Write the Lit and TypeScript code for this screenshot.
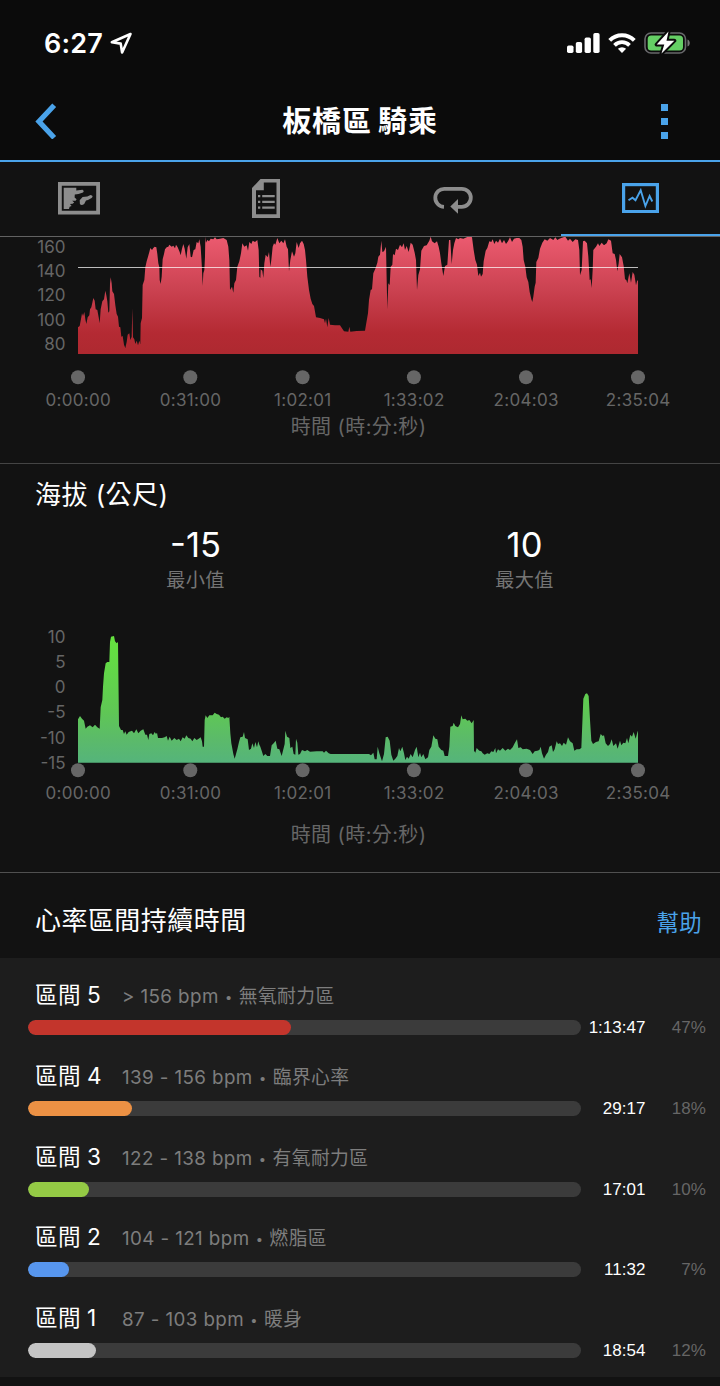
import { LitElement, html, css, svg } from "lit";
import { customElement, property } from "lit/decorators.js";

const TIMES = ["0:00:00", "0:31:00", "1:02:01", "1:33:02", "2:04:03", "2:35:04"];
const TICK_X = [78, 190.3, 302.6, 413.9, 526, 638];

interface Trace {
  shift: number;
  points: string;
}

// Samples in thirds of a pixel; each run is shifted along the time axis.
const HEART: Trace[] = [
  { shift: 60, points: "174,372 174,292 179,288 184,262 186,250 189,258 193,246 196,268 199,282 203,262 208,256 210,238 214,232 217,218 220,204 224,212 227,238 232,240 236,262 239,280 242,238 247,214 252,208 256,182 259,196 262,214 265,248 268,244 270,162 272,142 275,160 277,184 282,192 286,226 290,252 294,260 297,290 301,292 304,320 308,318 312,344 316,354 320,336 323,314 328,310 331,330 335,320 337,235 339,322 343,328 346,342 350,332 354,346 358,332 361,342 362,280 366,264 368,165 373,150 376,112 380,94 384,80 388,66 391,54 396,60 400,54 404,50 409,52 412,72 415,100 418,112 419,150 422,162 425,140 428,88 432,72 435,58 440,52 445,50 448,44 455,50 460,47 465,55 468,44 473,52 479,66 482,76 486,56 490,42 494,56 499,86 503,52 508,42 512,80 516,82 521,60 526,58 530,36 535,40 538,28 542,50 545,100 548,168 550,130 553,120 555,80 556,20 558,38 562,30 567,34 572,26 580,28 585,22 590,28 600,26 610,24 620,30 625,50 628,90 630,180 636,170 640,188 643,160 648,150 652,110 658,94 663,70 667,40 673,50 680,46 684,62 688,36 694,42 698,32 705,36 712,30 716,60 718,140" },
  { shift: 660, points: "121,144 122,118 127,122 130,144 133,100 137,74 143,82 147,66 151,110 154,90 158,50 162,40 166,44 172,24 178,40 184,32 190,40 195,28 200,50 204,58 207,124 211,90 216,64 222,80 226,70 230,36 236,54 240,40 246,32 251,42 255,60 258,90 262,140 267,180 272,206 277,222 282,228 288,262 300,264 312,268 315,280 318,266 322,292 326,264 330,284 345,286 360,286 372,304 385,305 388,290 391,305 410,303 435,302 438,284 444,250 447,210 452,180 456,178 460,130 466,116 472,98 475,80 480,74 484,32 487,66 492,64 498,50 500,150 502,238 505,160 509,165 512,110 517,104 519,72 524,76 528,56 534,60 540,44 546,52 551,40 555,60 560,48 566,66 572,38 578,44 584,68 588,90 591,180 595,135 600,118 604,62 612,48 620,46 628,32 632,20 636,34 644,40 651,34 656,50 660,70 664,100 670,138 675,108 682,104 687,30 691,30 695,102 699,60 703,40 708,24 715,28" },
  { shift: 1290, points: "90,24 100,26 110,22 118,18 126,22 131,60 136,90 141,104 145,138 150,128 153,140 158,132 161,94 167,62 172,54 178,34 184,36 188,28 193,42 198,32 204,38 210,26 216,40 222,30 228,42 234,34 240,22 246,36 252,26 260,24 268,24 274,30 278,50 281,90 286,110 290,142 295,156 299,186 304,208 307,216 310,200 314,170 317,158 319,96 325,84 330,56 337,38 344,28 352,32 360,24 370,30 376,22 382,30 388,26 400,22 406,20 414,32 420,26 428,36 436,28 444,30 448,60 450,136 455,120 459,34 464,32 471,40 475,80 479,150 482,148 485,174 488,120 490,60 498,50 504,40 508,48 515,38 522,46 530,40 535,28 543,32 548,70 554,72 558,90 562,124 566,100 569,72 576,82 581,108 585,148 589,150 592,160 598,130 603,158 608,126 613,134 618,166 621,154 624,150 624,372" },
];

const ALTITUDE: Trace[] = [
  { shift: 60, points: "174,428 174,298 180,288 186,296 192,302 197,326 202,320 210,316 218,322 225,314 232,322 239,326 242,262 247,240 249,200 252,160 257,130 262,126 268,126 270,66 273,50 282,48 285,64 290,70 294,66 297,318 303,330 308,330 312,342 316,334 320,344 326,336 336,332 342,340 349,328 355,340 362,332 370,328 376,344 381,344 385,360 388,342 394,340 399,346 404,336 408,342 411,338 414,354 426,354 434,352 440,348 444,362 449,350 455,362 463,354 470,360 477,356 482,364 488,352 494,356 499,346 505,354 512,356 517,364 523,354 530,360 536,356 542,352 546,364 548,380 552,380 554,300 557,286 562,294 568,286 578,286 584,278 590,282 597,284 603,292 608,290 614,296 620,292 625,294 628,290 631,340 634,370 640,402 644,416 647,406 652,388 657,366 661,352 668,350 672,336 675,354 683,358 687,390 693,386 697,370 702,384 706,366 711,382 715,364" },
  { shift: 660, points: "118,374 121,380 125,392 130,408 136,402 142,408 150,408 155,376 161,370 167,362 172,386 178,388 185,408 188,396 194,372 196,332 201,350 208,354 211,384 217,380 221,402 226,404 228,356 232,368 235,404 240,402 246,390 255,394 262,390 270,395 290,394 308,394 312,398 318,392 326,400 332,402 447,402 453,406 460,398 464,418 470,418 473,380 478,400 486,424 492,402 497,352 503,350 509,362 514,404 520,422 526,416 532,408 537,384 541,394 547,380 552,400 556,420 561,410 566,416 572,402 578,412 585,390 590,380 595,412 600,398 604,412 610,402 616,418 624,412 628,390 634,380 640,346 646,356 652,358 656,380 664,390 670,392 674,408 684,408 688,380 691,320 698,318 701,308" },
  { shift: 1290, points: "76,318 84,322 90,312 94,286 98,298 106,296 112,302 118,300 125,310 131,300 132,392 136,398 140,384 148,392 154,394 158,400 164,404 172,400 178,402 184,394 190,396 196,384 198,400 204,388 210,392 218,384 226,392 234,386 240,390 248,382 254,370 261,358 265,384 272,382 278,388 290,386 300,390 308,402 314,394 322,392 328,390 332,380 336,400 342,416 348,404 354,396 358,380 365,376 369,396 374,388 380,364 384,372 390,370 396,378 401,368 408,374 414,352 420,364 428,370 433,392 440,388 448,388 454,384 457,310 460,236 466,222 471,220 476,228 480,300 484,362 489,372 498,366 506,364 512,342 518,348 522,346 527,370 534,378 540,372 545,358 550,378 558,370 563,386 570,362 574,376 580,368 586,370 591,354 595,370 601,344 606,350 611,336 617,356 623,334 624,334 624,428" },
];

function areaPoints(traces: Trace[], originY: number): string {
  return traces
    .flatMap((t) =>
      t.points.split(" ").map((p) => {
        const [x, y] = p.split(",").map(Number);
        return `${((x + t.shift) / 3).toFixed(2)},${(y / 3 + originY).toFixed(2)}`;
      })
    )
    .join(" ");
}

const FONT = css`
  :host {
    font-family: Inter, "Noto Sans CJK TC", sans-serif;
  }
`;

@customElement("ride-chart")
class RideChart extends LitElement {
  @property({ type: String }) kind = "heart";

  static styles = [
    FONT,
    css`
      :host { display: block; }
      svg { display: block; }
      text { fill: #666; font-size: 17px; }
      .time { letter-spacing: 0.3px; text-anchor: middle; }
      .level { letter-spacing: 0; text-anchor: end; }
      .axis { font-size: 20px; letter-spacing: 0.4px; text-anchor: middle; }
      .dot { fill: #666; }
    `,
  ];

  render() {
    const heart = this.kind === "heart";
    const levels: [string, number][] = heart
      ? [["160", 9.5], ["140", 34], ["120", 58.3], ["100", 82.7], ["80", 107]]
      : [["10", 16.8], ["5", 42], ["0", 67.2], ["-5", 92.4], ["-10", 117.6], ["-15", 143]];
    const height = heart ? 226 : 252;
    const dotY = heart ? 140.3 : 150.3;
    const axisY = heart ? 197 : 222;
    const points = heart ? areaPoints(HEART, -7) : areaPoints(ALTITUDE, 0);
    return html`<svg width="720" height=${height} viewBox="0 0 720 ${height}">
      <defs>
        <linearGradient id="fill" x1="0" y1="0" x2="0" y2="1">
          ${heart
            ? svg`<stop offset="0" stop-color="#ec5b70"/><stop offset=".45" stop-color="#cb4251"/><stop offset=".82" stop-color="#b42a33"/><stop offset="1" stop-color="#ae2930"/>`
            : svg`<stop offset="0" stop-color="#65e33e"/><stop offset=".6" stop-color="#5fc755"/><stop offset=".82" stop-color="#5bba6a"/><stop offset="1" stop-color="#55b47b"/>`}
        </linearGradient>
      </defs>
      <polygon points=${points} fill="url(#fill)" />
      ${heart ? svg`<path d="M78 30.5H638" stroke="#fff" stroke-opacity=".72" stroke-width="1"/>` : null}
      ${levels.map(([t, y]) => svg`<text class="level" x="65.5" y=${y + 6}>${t}</text>`)}
      ${TIMES.map(
        (t, i) => svg`<circle class="dot" cx=${TICK_X[i]} cy=${dotY} r="7"/>
          <text class="time" x=${TICK_X[i] + 0.2} y=${dotY + 29}>${t}</text>`
      )}
      <text class="axis" x="358.6" y=${axisY}>時間 (時:分:秒)</text>
    </svg>`;
  }
}

@customElement("zone-row")
class ZoneRow extends LitElement {
  @property() name = "";
  @property() range = "";
  @property() label = "";
  @property() time = "";
  @property() share = "";
  @property() color = "";
  @property({ type: Number }) fill = 0;

  static styles = [
    FONT,
    css`
      :host { display: block; height: 80.8px; }
      .labels { display: flex; align-items: baseline; height: 43px; line-height: 36px; padding-left: 35px; }
      .name { width: 87px; color: #fff; font-size: 22.6px; letter-spacing: 0.5px; word-spacing: -1px; white-space: nowrap; }
      .detail { color: #7d7d7d; font-size: 18.8px; letter-spacing: 0.4px; white-space: nowrap; }
      .bullet { display: inline-block; width: 20px; text-align: center; font-family: "Liberation Sans", sans-serif; font-size: 15px; line-height: 20px; }
      .meter { display: flex; align-items: center; height: 15px; padding-left: 28px; }
      .track { width: 552.7px; height: 15px; border-radius: 8px; background: #3b3b3b; overflow: hidden; }
      .bar { height: 15px; border-radius: 8px; }
      .time { width: 64.7px; text-align: right; color: #fff; font: 17px/17px "Liberation Sans", sans-serif; }
      .share { width: 60.5px; text-align: right; color: #666; font: 17px/17px "Liberation Sans", sans-serif; }
    `,
  ];

  render() {
    return html`
      <div class="labels"><span class="name">${this.name}</span><span class="detail">${this.range}<span class="bullet">•</span>${this.label}</span></div>
      <div class="meter">
        <div class="track"><div class="bar" style="width:${this.fill}px;background:${this.color}"></div></div>
        <span class="time">${this.time}</span><span class="share">${this.share}</span>
      </div>
    `;
  }
}

const ZONES = [
  { name: "區間 5", range: "> 156 bpm", label: "無氧耐力區", time: "1:13:47", share: "47%", color: "#c3352c", fill: 263.3 },
  { name: "區間 4", range: "139 - 156 bpm", label: "臨界心率", time: "29:17", share: "18%", color: "#ec9144", fill: 104.3 },
  { name: "區間 3", range: "122 - 138 bpm", label: "有氧耐力區", time: "17:01", share: "10%", color: "#94ca45", fill: 60.8 },
  { name: "區間 2", range: "104 - 121 bpm", label: "燃脂區", time: "11:32", share: "7%", color: "#5796ee", fill: 40.8 },
  { name: "區間 1", range: "87 - 103 bpm", label: "暖身", time: "18:54", share: "12%", color: "#c4c4c4", fill: 68 },
];

@customElement("app-root")
class AppRoot extends LitElement {
  static styles = [
    FONT,
    css`
      :host { display: block; width: 720px; height: 1386px; overflow: hidden; background: #121212; color: #fff; }
      svg { display: block; }
      .status { display: flex; align-items: center; justify-content: space-between; height: 86px; padding: 0 29px 0 44px; box-sizing: border-box; background: #0b0b0b; }
      .clock { display: flex; align-items: center; gap: 7px; padding-top: 2px; font-size: 27px; font-weight: 600; line-height: 30px; letter-spacing: 0.2px; }
      .location { margin-bottom: 2px; }
      .signals { display: flex; align-items: center; gap: 8px; }
      .header { display: flex; align-items: center; justify-content: space-between; height: 76px; padding: 0 51px 5px 35px; box-sizing: border-box; background: #0b0b0b; border-bottom: 2px solid #4aa3ea; }
      .title { font-size: 29px; font-weight: 600; letter-spacing: 0.9px; word-spacing: -2px; line-height: 36px; padding: 2px 0 0 3px; }
      .tabs { display: flex; justify-content: space-between; height: 75px; box-sizing: border-box; border-bottom: 1px solid #626262; }
      .tab { display: flex; align-items: center; justify-content: center; width: 159px; height: 74px; padding-right: 1px; box-sizing: border-box; border-bottom: 2px solid transparent; }
      .tab.active { padding-right: 0; border-bottom-color: #4aa3ea; }
      .heart { height: 227px; box-sizing: border-box; border-bottom: 1px solid #444; }
      .altitude { height: 409px; box-sizing: border-box; border-bottom: 1px solid #505050; }
      .heading { font-size: 26px; line-height: 36px; letter-spacing: 0.45px; font-weight: 400; }
      .altitude .heading { padding: 13px 0 0 35px; height: 49px; box-sizing: border-box; }
      .stats { display: flex; padding-left: 31px; height: 107px; box-sizing: border-box; }
      .stat { width: 329px; text-align: center; }
      .value { font-size: 34.5px; line-height: 40px; padding-top: 12px; letter-spacing: 0; }
      .caption { font-size: 19.2px; line-height: 26px; margin-top: 2px; letter-spacing: 0.3px; color: #757575; }
      .zonehead { display: flex; align-items: center; justify-content: space-between; height: 85px; padding: 10px 18px 0 35px; box-sizing: border-box; }
      .help { color: #4aa3ea; font-size: 22.4px; line-height: 30px; letter-spacing: 0.3px; padding-top: 5px; }
      .zones { height: 419px; padding-top: 19px; box-sizing: border-box; background: #1d1d1d; }
    `,
  ];

  render() {
    return html`
      <div class="status">
        <div class="clock">
          <span>6:27</span>
          <svg class="location" width="23" height="23" viewBox="0 0 23 23" fill="none" stroke="#fff" stroke-width="2.6" stroke-linejoin="round"><path d="M20.5 2 1.8 10.2l8.9 1.4 1.4 8.9z"/></svg>
        </div>
        <div class="signals">
          <svg width="33" height="22" viewBox="0 0 33 22" fill="#fff"><rect y="13.5" width="6.5" height="7.5" rx="1.7"/><rect x="8.8" y="10" width="6.3" height="11" rx="1.7"/><rect x="17.6" y="5.5" width="6.3" height="15.5" rx="1.7"/><rect x="26.3" y="1" width="6.3" height="20" rx="1.7"/></svg>
          <svg width="28" height="22" viewBox="0 0 28 22" fill="none" stroke="#fff"><path d="M1.7 8.3a17.4 17.4 0 0 1 24.6 0" stroke-width="4"/><path d="M6.5 13.3a10.6 10.6 0 0 1 15 0" stroke-width="3.8"/><path d="M9.9 16.8a5.9 5.9 0 0 1 8.2 0L14 21z" fill="#fff" stroke="none"/></svg>
          <svg width="47" height="24" viewBox="0 0 47 24"><rect x="1" y="2" width="40.5" height="20" rx="6" fill="none" stroke="#68686b" stroke-width="1.6"/><rect x="3.7" y="4.5" width="35.3" height="15" rx="3.5" fill="#65cf65"/><path d="M43.5 8.5v7c3-1 3-6 0-7z" fill="#777"/><path d="M24.5.5 12.7 13.5h7.6L17.5 22.5 30.3 9.7h-7.8z" fill="#fff" stroke="#0b0b0b" stroke-width="4" stroke-linejoin="round" paint-order="stroke"/></svg>
        </div>
      </div>
      <div class="header">
        <svg width="22" height="36" viewBox="0 0 22 36" fill="none" stroke="#4aa3ea" stroke-width="5.3"><path d="M19.2 2.3 4 18.5 19.2 34.7"/></svg>
        <div class="title">板橋區 騎乘</div>
        <svg width="9" height="37" viewBox="0 0 9 37" fill="#4aa3ea"><path d="M1 2h7v7H1zM1 16h7v7H1zM1 30h7v7H1z"/></svg>
      </div>
      <div class="tabs">
        <div class="tab">
          <svg width="42" height="33" viewBox="0 0 42 33" fill="#8d8d8d"><path fill-rule="evenodd" d="M0 0h42v32.5H0zM3.8 3.7v25.1h34.4V3.7z"/><path d="M5.7 5.8H18.3V8.6L24.5 7.7Q26.6 9 25 10.5L20.5 12 16.8 12.6 16.6 15.5 18.6 17.2 17.6 18.8 14.2 18.8 16.2 20.6 14.6 21.8 12 22 13.6 24 11.6 24.7 11 27H5.7z"/><path d="M21.7 18.3 24.6 14.9 29.3 14.5 32.5 12.9Q36 13.4 33.6 16L30 18 28 18.6 26.2 21.9Q23.5 24 21.9 22z"/></svg>
        </div>
        <div class="tab">
          <svg width="28" height="39" viewBox="0 0 28 39" fill="#8d8d8d"><path fill-rule="evenodd" d="M8.5 0H28v39H0V9zM11.8 3.5v7.8H4v24h20.5V3.5z"/><path d="M6 16h2.3v2.3H6zm4.2 0h12.5v2.3H10.2zM6 21.7h2.3V24H6zm4.2 0h12.5V24H10.2zM6 27.5h2.3v2.3H6zm4.2 0h12.5v2.3H10.2z"/></svg>
        </div>
        <div class="tab">
          <svg width="40" height="32" viewBox="0 0 40 32" fill="none" stroke="#8d8d8d" stroke-width="3.8"><path d="M11 24.8A9 9 0 0 1 11.6 6.8H28.8A9 9 0 0 1 28.8 24.8H23"/><path d="M17.3 24.6 25 17v14.8z" fill="#8d8d8d" stroke="none"/></svg>
        </div>
        <div class="tab active">
          <svg width="37" height="30" viewBox="0 0 37 30" fill="none" stroke="#4aa3ea"><rect x="1.6" y="1.6" width="33.8" height="27" stroke-width="3.2"/><path d="M6.5 17.3 10.5 14.7 13.5 17.3 18.7 7.3 23.4 23 27.6 13 30.3 18.5" stroke-width="1.9"/></svg>
        </div>
      </div>
      <div class="heart"><ride-chart kind="heart"></ride-chart></div>
      <div class="altitude">
        <div class="heading">海拔 (公尺)</div>
        <div class="stats">
          <div class="stat"><div class="value">-15</div><div class="caption">最小值</div></div>
          <div class="stat"><div class="value">10</div><div class="caption">最大值</div></div>
        </div>
        <ride-chart kind="altitude"></ride-chart>
      </div>
      <div class="zonehead"><div class="heading">心率區間持續時間</div><div class="help">幫助</div></div>
      <div class="zones">
        ${ZONES.map(
          (z) => html`<zone-row .name=${z.name} .range=${z.range} .label=${z.label} .time=${z.time} .share=${z.share} .color=${z.color} .fill=${z.fill}></zone-row>`
        )}
      </div>
    `;
  }
}
